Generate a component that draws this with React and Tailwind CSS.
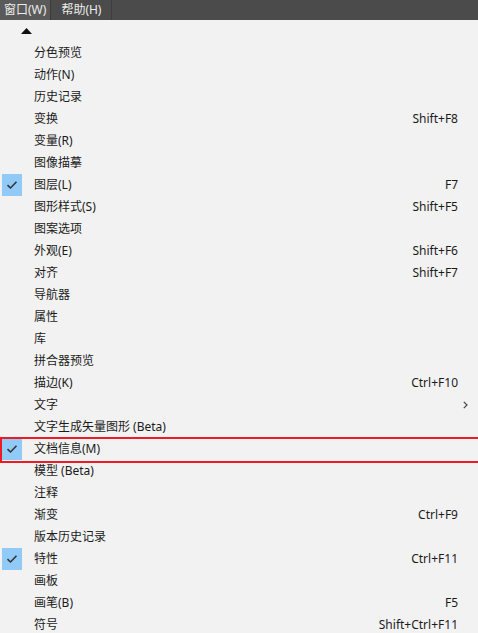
import React from 'react';

const items = [
  { label: '分色预览' },
  { label: '动作(N)' },
  { label: '历史记录' },
  { label: '变换', key: 'Shift+F8' },
  { label: '变量(R)' },
  { label: '图像描摹' },
  { label: '图层(L)', key: 'F7', checked: true },
  { label: '图形样式(S)', key: 'Shift+F5' },
  { label: '图案选项' },
  { label: '外观(E)', key: 'Shift+F6' },
  { label: '对齐', key: 'Shift+F7' },
  { label: '导航器' },
  { label: '属性' },
  { label: '库' },
  { label: '拼合器预览' },
  { label: '描边(K)', key: 'Ctrl+F10' },
  { label: '文字', sub: true },
  { label: '文字生成矢量图形 (Beta)' },
  { label: '文档信息(M)', checked: true, boxed: true },
  { label: '模型 (Beta)' },
  { label: '注释' },
  { label: '渐变', key: 'Ctrl+F9' },
  { label: '版本历史记录' },
  { label: '特性', key: 'Ctrl+F11', checked: true },
  { label: '画板' },
  { label: '画笔(B)', key: 'F5' },
  { label: '符号', key: 'Shift+Ctrl+F11' },
];

function Check() {
  return (
    <svg width="12" height="10" viewBox="0 0 12 10">
      <path d="M1.5 5.2 L4.5 8 L10.5 1.8" fill="none" stroke="#333" strokeWidth="1.6" />
    </svg>
  );
}

export default function App() {
  return (
    <div
      className="w-[478px] h-[633px] overflow-hidden bg-[#f2f2f2] text-[12px] text-[#1b1b1b] flex flex-col"
      style={{ fontFamily: '"Noto Sans", "Noto Sans CJK SC", sans-serif' }}
    >
      {/* menu bar */}
      <div className="h-[20px] w-full bg-[#4b4b4b] flex items-stretch text-[#ececec] shrink-0">
        <div className="px-[4px] flex items-center bg-[#5a5a5a] border-r border-[#3a3a3a]">窗口(W)</div>
        <div className="px-[10px] flex items-center border-r border-[#3e3e3e]">帮助(H)</div>
        <div className="flex-1" />
      </div>

      <div className="h-[22px] flex items-center pl-[21px] shrink-0">
        <svg width="11" height="6" viewBox="0 0 11 6">
          <path d="M0 6 L5.5 0 L11 6 Z" fill="#111" />
        </svg>
      </div>

      <div className="flex flex-col">
        {items.map((it, i) => (
          <div key={i} className="relative h-[22px] flex items-center pr-[20px]">
            <div className="w-[34px] h-full flex items-center pl-[2px] shrink-0">
              {it.checked && (
                <div className="w-[20px] h-[22px] bg-[#91c9f7] flex items-center justify-center">
                  <Check />
                </div>
              )}
            </div>
            <span className="flex-1 leading-none">{it.label}</span>
            {it.key && <span className="leading-none">{it.key}</span>}
            {it.sub && (
              <svg className="absolute right-[10px] top-[7px]" width="5" height="8" viewBox="0 0 5 8">
                <path d="M0.8 0.8 L4 4 L0.8 7.2" fill="none" stroke="#444" strokeWidth="1.2" />
              </svg>
            )}
            {it.boxed && (
              <div className="absolute left-0 -right-[4px] top-[-1px] bottom-[-3px] border-2 border-[#ec1c24]" />
            )}
          </div>
        ))}
      </div>
    </div>
  );
}
